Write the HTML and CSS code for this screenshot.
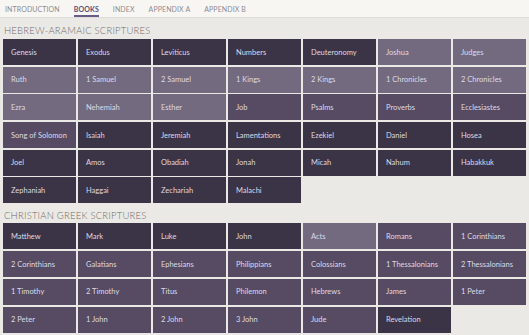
FILE: index.html
```html
<!DOCTYPE html>
<html>
<head>
    <meta charset="utf-8">
    <title>Books</title>
    <link rel="stylesheet" href="styles.css">
</head>
<body>
    <div class="tabs">
        <div class="tab">Introduction</div>
        <div class="tab active">Books</div>
        <div class="tab">Index</div>
        <div class="tab">Appendix A</div>
        <div class="tab">Appendix B</div>
    </div>

    <div class="section-title">Hebrew-Aramaic Scriptures</div>
    <div class="books">
        <div class="book dark">Genesis</div>
        <div class="book dark">Exodus</div>
        <div class="book dark">Leviticus</div>
        <div class="book dark">Numbers</div>
        <div class="book dark">Deuteronomy</div>
        <div class="book light">Joshua</div>
        <div class="book light">Judges</div>
        <div class="book light">Ruth</div>
        <div class="book light">1 Samuel</div>
        <div class="book light">2 Samuel</div>
        <div class="book light">1 Kings</div>
        <div class="book light">2 Kings</div>
        <div class="book light">1 Chronicles</div>
        <div class="book light">2 Chronicles</div>
        <div class="book light">Ezra</div>
        <div class="book light">Nehemiah</div>
        <div class="book light">Esther</div>
        <div class="book mid">Job</div>
        <div class="book mid">Psalms</div>
        <div class="book mid">Proverbs</div>
        <div class="book mid">Ecclesiastes</div>
        <div class="book mid">Song of Solomon</div>
        <div class="book dark">Isaiah</div>
        <div class="book dark">Jeremiah</div>
        <div class="book dark">Lamentations</div>
        <div class="book dark">Ezekiel</div>
        <div class="book dark">Daniel</div>
        <div class="book dark">Hosea</div>
        <div class="book dark">Joel</div>
        <div class="book dark">Amos</div>
        <div class="book dark">Obadiah</div>
        <div class="book dark">Jonah</div>
        <div class="book dark">Micah</div>
        <div class="book dark">Nahum</div>
        <div class="book dark">Habakkuk</div>
        <div class="book dark">Zephaniah</div>
        <div class="book dark">Haggai</div>
        <div class="book dark">Zechariah</div>
        <div class="book dark">Malachi</div>
    </div>

    <div class="section-title">Christian Greek Scriptures</div>
    <div class="books">
        <div class="book dark">Matthew</div>
        <div class="book dark">Mark</div>
        <div class="book dark">Luke</div>
        <div class="book dark">John</div>
        <div class="book light">Acts</div>
        <div class="book mid">Romans</div>
        <div class="book mid">1 Corinthians</div>
        <div class="book mid">2 Corinthians</div>
        <div class="book mid">Galatians</div>
        <div class="book mid">Ephesians</div>
        <div class="book mid">Philippians</div>
        <div class="book mid">Colossians</div>
        <div class="book mid">1 Thessalonians</div>
        <div class="book mid">2 Thessalonians</div>
        <div class="book mid">1 Timothy</div>
        <div class="book mid">2 Timothy</div>
        <div class="book mid">Titus</div>
        <div class="book mid">Philemon</div>
        <div class="book mid">Hebrews</div>
        <div class="book mid">James</div>
        <div class="book mid">1 Peter</div>
        <div class="book mid">2 Peter</div>
        <div class="book mid">1 John</div>
        <div class="book mid">2 John</div>
        <div class="book mid">3 John</div>
        <div class="book mid">Jude</div>
        <div class="book dark">Revelation</div>
    </div>
</body>
</html>
```

FILE: styles.css
```css
* {
    margin: 0;
    padding: 0;
    box-sizing: border-box;
}

body {
    font-family: Lato, "Open Sans", sans-serif;
    background: #ebe9e5;
    overflow: hidden;
}

.tabs {
    display: flex;
    height: 18px;
    padding-left: 5px;
    gap: 14px;
    background: #f8f6f2;
    border-bottom: 1px solid #dedcd8;
}

.tab {
    font-size: 7px;
    line-height: 16px;
    letter-spacing: 0.1px;
    text-transform: uppercase;
    color: #8e8b93;
    border-bottom: 2px solid transparent;
    padding-top: 1px;
}

.tab.active {
    color: #5b4d78;
    font-weight: bold;
    border-bottom-color: #6a5c88;
}

.section-title {
    font-size: 9.5px;
    font-weight: 300;
    text-transform: uppercase;
    color: #6e6c6c;
    padding: 7px 4px 0;
    height: 21px;
    letter-spacing: 0.2px;
}

.books {
    display: grid;
    grid-template-columns: repeat(7, 73px);
    grid-auto-rows: 26px;
    gap: 1.7px 2px;
    padding: 0 3px;
}

.books + .section-title {
    padding-top: 7px;
    height: 20px;
}

.book {
    display: flex;
    align-items: center;
    padding-left: 8px;
    font-size: 7.5px;
    color: #dedae4;
    white-space: nowrap;
}

.book.dark {
    background: #3b3346;
}

.book.mid {
    background: #564b63;
}

.book.light {
    background: #736a80;
}
```
